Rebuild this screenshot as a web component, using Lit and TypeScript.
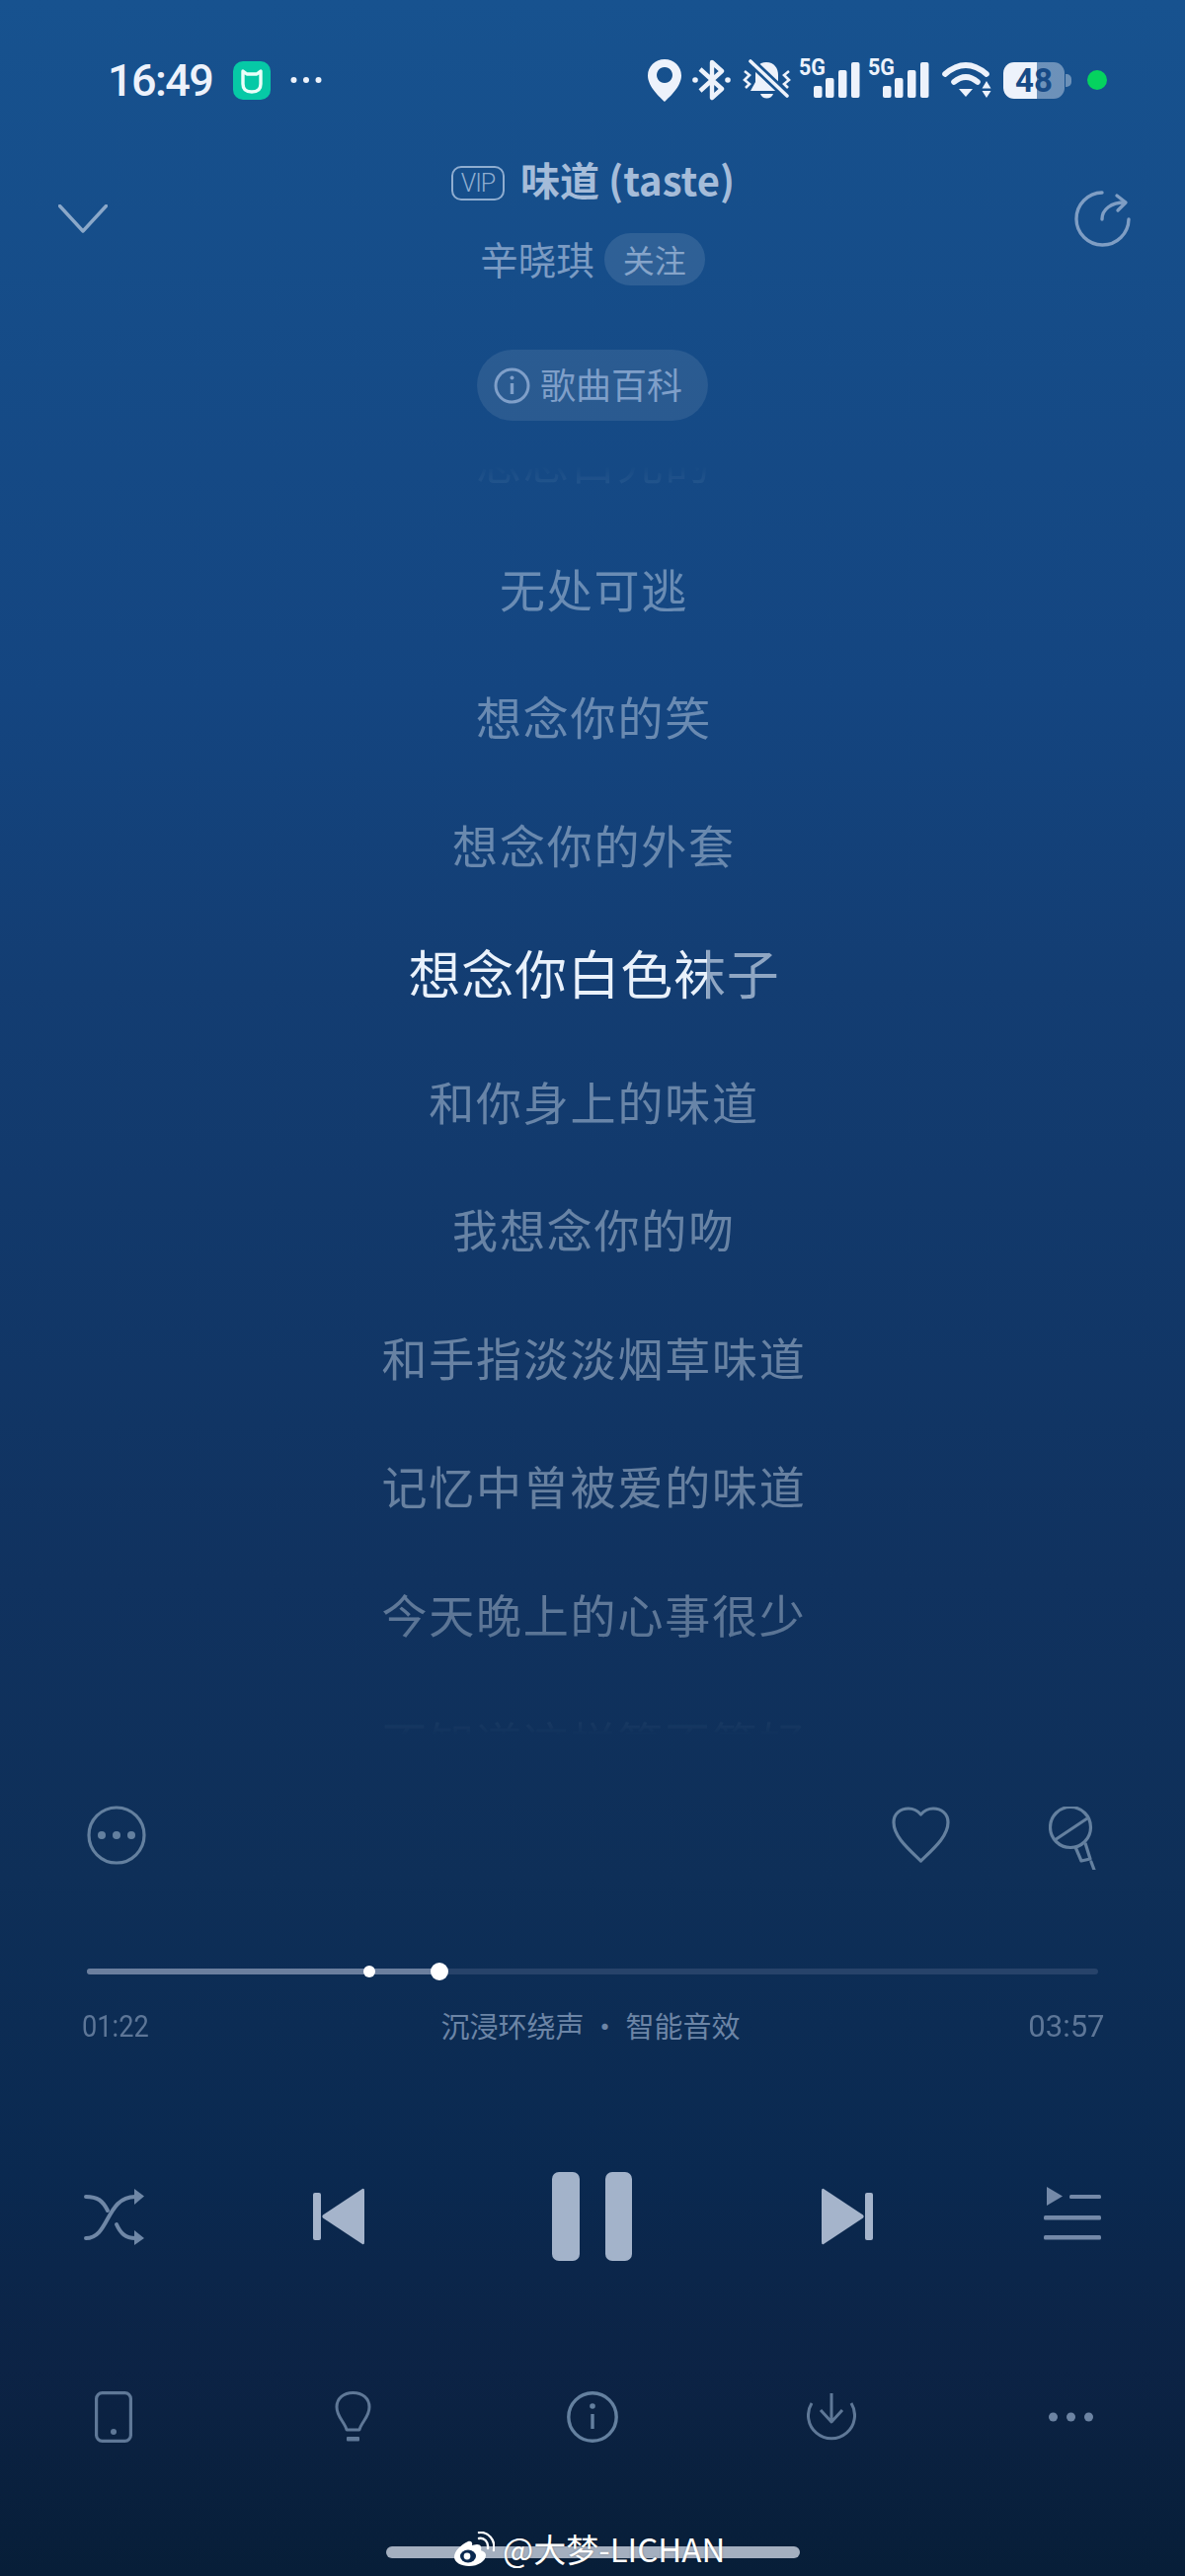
import { LitElement, css, html, svg } from 'lit';
import { customElement, state } from 'lit/decorators.js';

const LYRICS = [
  '思念白光的',
  '无处可逃',
  '想念你的笑',
  '想念你的外套',
  '想念你白色袜子',
  '和你身上的味道',
  '我想念你的吻',
  '和手指淡淡烟草味道',
  '记忆中曾被爱的味道',
  '今天晚上的心事很少',
  '不知道这样算不算好',
];
const ACTIVE = 4;

const signal = () => html`
  <svg class="signal" width="62" height="48" viewBox="0 0 62 48">
    <text x="0" y="25" textLength="27" lengthAdjust="spacingAndGlyphs" class="five-g">5G</text>
    ${[
      [15, 36],
      [27, 28],
      [40, 20],
      [53, 12],
    ].map(([x, y]) => svg`<rect x=${x} y=${y} width="8.5" height=${48 - y} rx="2" fill="#edf2fb"></rect>`)}
  </svg>
`;

@customElement('app-root')
export class AppRoot extends LitElement {
  @state() progress = 357 / 1023;
  @state() marker = 286 / 1023;

  static styles = css`
    :host {
      background: linear-gradient(
        to bottom,
        #17528f 0,
        #144580 700px,
        #133d72 1000px,
        #10325f 1600px,
        #0e2f58 1900px,
        #0a2950 2200px,
        #0c2345 2400px,
        #071e38 2608px
      );
      color: #fff;
      display: flex;
      flex-direction: column;
      font-family: 'Noto Sans CJK SC', 'Noto Sans', sans-serif;
      height: 2608px;
      overflow: hidden;
      position: relative;
      width: 1200px;
    }

    svg {
      display: block;
      flex: none;
    }

    /* status bar */
    .status {
      align-items: center;
      display: flex;
      flex: none;
      height: 162px;
      justify-content: space-between;
      padding: 0 79px 0 109px;
    }

    .status-left,
    .status-right {
      align-items: center;
      display: flex;
    }

    .clock {
      color: #edf2fb;
      font: 500 45px/1 Roboto, sans-serif;
      letter-spacing: -1.6px;
      width: 107px;
    }

    .mi {
      margin-left: 20px;
    }

    .status-dots {
      margin-left: 20px;
    }

    .bt {
      margin-left: 11px;
    }

    .bell {
      margin-left: 12px;
    }

    .signal {
      margin-bottom: 12px;
      margin-left: 8px;
    }

    .wifi {
      margin-left: 13px;
    }

    .battery {
      align-items: center;
      background: linear-gradient(to right, #edf2fb 34px, rgba(237, 242, 251, 0.4) 34px);
      border-radius: 11px;
      color: #174a86;
      display: flex;
      font: 700 33px/37px Roboto, sans-serif;
      height: 37px;
      justify-content: center;
      margin-left: 12px;
      margin-right: 7px;
      position: relative;
      width: 62px;
    }

    .battery::after {
      background: rgba(237, 242, 251, 0.4);
      border-radius: 0 5px 5px 0;
      content: '';
      height: 13px;
      left: 63px;
      position: absolute;
      top: 12px;
      width: 6px;
    }

    .live {
      background: #05d35f;
      border-radius: 50%;
      height: 20px;
      margin-left: 16px;
      width: 20px;
    }

    .five-g {
      fill: #edf2fb;
      font: 700 23px Roboto, sans-serif;
    }

    /* header */
    .header {
      display: flex;
      flex: none;
      height: 127px;
      justify-content: space-between;
      padding: 0 55px 0 59px;
    }

    .chevron {
      margin-top: 45px;
    }

    .share {
      margin-top: 31px;
    }

    .heading {
      align-items: center;
      display: flex;
      flex: 1;
      flex-direction: column;
      gap: 32px;
    }

    .title-row {
      align-items: center;
      display: flex;
      gap: 16px;
      height: 42px;
      margin-left: 4px;
    }

    .vip {
      align-items: center;
      border: 2px solid #8fadd0;
      border-radius: 10px;
      box-sizing: border-box;
      color: #8fadd0;
      display: flex;
      font: 300 25px/1 Roboto, sans-serif;
      height: 35px;
      justify-content: center;
      letter-spacing: -1px;
      margin-top: 5px;
      width: 54px;
    }

    .title {
      color: #a5bcd9;
      font-size: 40px;
      font-weight: 700;
      line-height: 42px;
      margin-top: -5px;
    }

    .artist-row {
      align-items: center;
      display: flex;
      gap: 10px;
      height: 53px;
      margin-left: 3px;
    }

    .artist {
      color: #7b9bc3;
      font-size: 38.5px;
      margin-top: -3px;
    }

    .follow {
      background: rgba(255, 255, 255, 0.11);
      border-radius: 27px;
      color: #86a4c9;
      font-size: 32px;
      line-height: 53px;
      padding: 0 19px;
    }

    .wiki {
      align-items: center;
      align-self: center;
      background: rgba(255, 255, 255, 0.09);
      border-radius: 36px;
      box-sizing: border-box;
      color: #7f9fc9;
      display: flex;
      flex: none;
      font-size: 36px;
      gap: 10px;
      height: 72px;
      margin-top: 65px;
      padding-left: 17px;
      width: 234px;
    }

    .wiki span {
      margin-top: -5px;
    }

    /* lyrics */
    .lyrics {
      flex: none;
      height: 1330px;
      overflow: hidden;
      -webkit-mask-image: linear-gradient(
        to bottom,
        transparent 45px,
        rgba(0, 0, 0, 0.16) 64px,
        #000 135px,
        #000 1150px,
        rgba(0, 0, 0, 0.85) 1230px,
        rgba(0, 0, 0, 0.1) 1318px,
        transparent 1332px
      );
      mask-image: linear-gradient(
        to bottom,
        transparent 45px,
        rgba(0, 0, 0, 0.16) 64px,
        #000 135px,
        #000 1150px,
        rgba(0, 0, 0, 0.85) 1230px,
        rgba(0, 0, 0, 0.1) 1318px,
        transparent 1332px
      );
    }

    .lyric-list {
      margin-top: -26px;
    }

    .line {
      align-items: center;
      color: rgba(235, 245, 255, 0.4);
      display: flex;
      font-size: 46px;
      height: 129.75px;
      justify-content: center;
      letter-spacing: 1.8px;
      padding-left: 3px;
    }

    .line.active {
      font-size: 53px;
      letter-spacing: 0.7px;
    }

    .wipe {
      background: linear-gradient(to right, #e9f1fb 80.6%, #8fa6c3 80.6%);
      -webkit-background-clip: text;
      background-clip: text;
      color: transparent;
    }

    /* actions + progress */
    .actions {
      display: flex;
      flex: none;
      height: 60px;
      margin-top: 72px;
      padding: 0 90px 0 88px;
    }

    .heart {
      margin-left: auto;
      margin-top: 1px;
    }

    .mic {
      margin-left: 100px;
      margin-top: 1px;
    }

    .progress {
      background: #27436a;
      border-radius: 3px;
      flex: none;
      height: 6px;
      margin: 105px 88px 0;
      position: relative;
    }

    .fill {
      background: #6b7f9e;
      border-radius: 3px;
      height: 100%;
    }

    .knob,
    .mark {
      background: #fff;
      border-radius: 50%;
      position: absolute;
      top: 50%;
      transform: translate(-50%, -50%);
    }

    .knob {
      height: 18px;
      width: 18px;
    }

    .mark {
      height: 12px;
      width: 12px;
    }

    .meta {
      align-items: center;
      color: #5d7697;
      display: flex;
      flex: none;
      height: 28px;
      justify-content: space-between;
      margin-top: 38px;
      padding: 0 86px 0 83px;
    }

    .stamp {
      font: 400 32px/1 Roboto, sans-serif;
      transform: scaleX(0.85);
      transform-origin: left center;
      white-space: nowrap;
      width: 68px;
    }

    .stamp.end {
      text-align: right;
      transform: scaleX(0.97);
      transform-origin: right center;
      width: 75px;
    }

    .effects {
      color: #6c85a6;
      font-size: 29px;
      margin-left: 6px;
      margin-top: -2px;
      white-space: nowrap;
    }

    /* transport */
    .transport {
      align-items: center;
      display: flex;
      flex: none;
      height: 90px;
      margin-top: 134px;
      padding-left: 85px;
    }

    .prev {
      margin-left: 171px;
    }

    .pause {
      display: flex;
      gap: 26px;
      margin-left: 190px;
    }

    .pause span {
      background: #a3b3ca;
      border-radius: 7px;
      display: block;
      height: 90px;
      width: 27.5px;
    }

    .next {
      margin-left: 192px;
    }

    .queue {
      margin-left: 173px;
      margin-top: -6px;
    }

    /* tools */
    .tools {
      align-items: center;
      display: grid;
      flex: none;
      grid-template-columns: repeat(5, 1fr);
      height: 52px;
      justify-items: center;
      margin: 132px -6px 0;
    }

    .home {
      align-self: center;
      background: #a4afbf;
      border-radius: 6px;
      flex: none;
      height: 12px;
      margin-top: 105px;
      width: 419px;
    }

    /* weibo watermark, sits over the home indicator */
    .watermark {
      align-items: center;
      color: #fff;
      display: flex;
      font-size: 33px;
      gap: 8px;
      left: 459px;
      position: absolute;
      text-shadow: 0 0 2px rgba(0, 0, 0, 0.35);
      top: 2556px;
      white-space: nowrap;
    }
  `;

  render() {
    return html`
      <div class="status">
        <div class="status-left">
          <span class="clock">16:49</span>
          <svg class="mi" width="38" height="39" viewBox="0 0 38 39">
            <rect width="38" height="39" rx="10" fill="#06c9a6"></rect>
            <path
              d="M10 10 L14 13 H24 L28 10 V23 C28 29 24 31 19 31 C14 31 10 29 10 23 Z"
              fill="none"
              stroke="#eafff9"
              stroke-width="3.4"
              stroke-linejoin="round"
            ></path>
            <path d="M13 24 H25" stroke="#06c9a6" stroke-width="2"></path>
          </svg>
          <svg class="status-dots" width="32" height="8" viewBox="0 0 32 8" fill="#edf2fb">
            <circle cx="3.5" cy="4" r="3"></circle>
            <circle cx="16" cy="4" r="3"></circle>
            <circle cx="28.5" cy="4" r="3"></circle>
          </svg>
        </div>
        <div class="status-right">
          <svg width="34" height="43" viewBox="0 0 34 43">
            <path
              fill="#edf2fb"
              fill-rule="evenodd"
              d="M17 0 C7.6 0 0 7.2 0 16.5 C0 28 13 39 17 43 C21 39 34 28 34 16.5 C34 7.2 26.4 0 17 0 Z M17 8 a8 8 0 1 0 .01 0 Z"
            ></path>
          </svg>
          <svg class="bt" width="39" height="42" viewBox="0 0 39 42" fill="none" stroke="#edf2fb">
            <path d="M8 10 L30 30 L20 39 V3 L30 12 L8 32" stroke-width="4.4" stroke-linejoin="round"></path>
            <circle cx="3" cy="21" r="2.8" fill="#edf2fb" stroke="none"></circle>
            <circle cx="36" cy="21" r="2.8" fill="#edf2fb" stroke="none"></circle>
          </svg>
          <svg class="bell" width="49" height="43" viewBox="0 0 49 43" fill="none">
            <path d="M24 3 C16 3 13 9 13 16 L13 23 L8 32 L41 32 L36 23 L36 16 C36 9 32 3 24 3 Z" fill="#edf2fb"></path>
            <path d="M18 35 H31 C29 41 20 41 18 35 Z" fill="#edf2fb"></path>
            <path d="M8 2 L45 37" stroke="#17528f" stroke-width="9"></path>
            <path d="M8 2 L45 37" stroke="#edf2fb" stroke-width="3.6" stroke-linecap="round"></path>
            <path d="M2 12 L7 16 L2 21 L7 25 L3 29" stroke="#edf2fb" stroke-width="2.6"></path>
            <path d="M47 12 L42 16 L47 21 L42 25 L46 29" stroke="#edf2fb" stroke-width="2.6"></path>
          </svg>
          ${signal()} ${signal()}
          <svg class="wifi" width="50" height="36" viewBox="0 0 50 36" fill="none" stroke="#edf2fb">
            <path d="M3 12 Q24 -6 45 12" stroke-width="5.6" stroke-linecap="round"></path>
            <path d="M12 20 Q24 10 36 20" stroke-width="5.6" stroke-linecap="round"></path>
            <path d="M17 27 H31 L24 35 Z" fill="#edf2fb" stroke="none"></path>
            <path d="M45 19 L49.5 26.5 H40.5 Z M40.5 29 H49.5 L45 36 Z" fill="#edf2fb" stroke="none"></path>
          </svg>
          <div class="battery">48</div>
          <span class="live"></span>
        </div>
      </div>

      <div class="header">
        <svg class="chevron" width="50" height="29" viewBox="0 0 50 29" fill="none" stroke="#8ba8c9" stroke-width="3.4">
          <path d="M1.5 1.5 L25 27 L48.5 1.5" stroke-linecap="round" stroke-linejoin="round"></path>
        </svg>
        <div class="heading">
          <div class="title-row">
            <span class="vip">VIP</span>
            <span class="title">味道 (taste)</span>
          </div>
          <div class="artist-row">
            <span class="artist">辛晓琪</span>
            <span class="follow">关注</span>
          </div>
        </div>
        <svg class="share" width="57" height="58" viewBox="0 0 57 58" fill="none" stroke="#7f9ec4" stroke-width="3.4" stroke-linecap="round" stroke-linejoin="round">
          <path d="M28 2 A26.5 26.5 0 1 0 55 29"></path>
          <path d="M28 29 C28 19 37 12 51 12"></path>
          <path d="M43 5 L52 12 L44 20"></path>
        </svg>
      </div>

      <div class="wiki">
        <svg width="37" height="37" viewBox="0 0 37 37" fill="none" stroke="currentColor" stroke-width="3">
          <circle cx="18.5" cy="18.5" r="16.5"></circle>
          <path d="M18.5 16 V27" stroke-width="3.4"></path>
          <circle cx="18.5" cy="10.5" r="2" fill="currentColor" stroke="none"></circle>
        </svg>
        <span>歌曲百科</span>
      </div>

      <div class="lyrics">
        <div class="lyric-list">
          ${LYRICS.map((text, i) =>
            i === ACTIVE
              ? html`<div class="line active"><span class="wipe">${text}</span></div>`
              : html`<div class="line">${text}</div>`,
          )}
        </div>
      </div>

      <div class="actions">
        <svg width="60" height="60" viewBox="0 0 60 60" fill="none" stroke="#64809f" stroke-width="3.2">
          <circle cx="30" cy="30" r="28"></circle>
          <g fill="#64809f" stroke="none">
            <circle cx="15" cy="30" r="4"></circle>
            <circle cx="30" cy="30" r="4"></circle>
            <circle cx="45" cy="30" r="4"></circle>
          </g>
        </svg>
        <svg class="heart" width="59" height="58" viewBox="0 0 59 58" fill="none" stroke="#64809f" stroke-width="3.2" stroke-linejoin="round">
          <path d="M29.5 55 C16 42 2 30 2 16 C2 7 9 2 17 2 C22 2 26 4 29.5 8 C33 4 37 2 42 2 C50 2 57 7 57 16 C57 30 43 42 29.5 55 Z"></path>
        </svg>
        <svg class="mic" width="48" height="64" viewBox="0 0 48 64" fill="none" stroke="#64809f" stroke-width="3.2" stroke-linejoin="round">
          <circle cx="22" cy="21" r="20.5"></circle>
          <path d="M6 34 L39 12"></path>
          <path d="M27 41 L33 55 L42 53 L37 37"></path>
          <path d="M43 56 L46 64" stroke-linecap="round"></path>
        </svg>
      </div>

      <div class="progress">
        <div class="fill" style="width:${this.progress * 100}%"></div>
        <span class="mark" style="left:${this.marker * 100}%"></span>
        <span class="knob" style="left:${this.progress * 100}%"></span>
      </div>

      <div class="meta">
        <span class="stamp">01:22</span>
        <span class="effects">沉浸环绕声 · 智能音效</span>
        <span class="stamp end">03:57</span>
      </div>

      <div class="transport">
        <svg width="61" height="57" viewBox="0 0 61 57" fill="none" stroke="#6f87a6" stroke-width="4" stroke-linecap="round">
          <path d="M2 8 C14 8 19 12 24 22"></path>
          <path d="M2 50 C26 50 22 8 52 8"></path>
          <path d="M33 36 C37 45 42 50 52 50"></path>
          <g fill="#6f87a6" stroke="none">
            <path d="M51 0 L61 7.5 L51 16 Z"></path>
            <path d="M51 42 L61 50 L51 57 Z"></path>
          </g>
        </svg>
        <svg class="prev" width="52" height="58" viewBox="0 0 52 58" fill="#a5b4cb">
          <rect y="5" width="8" height="48" rx="2"></rect>
          <path d="M50 1 Q52 0 52 3 V55 Q52 58 50 57 L10 30.5 Q8.5 29 10 27.5 Z"></path>
        </svg>
        <div class="pause"><span></span><span></span></div>
        <svg class="next" width="52" height="58" viewBox="0 0 52 58" fill="#a5b4cb">
          <rect x="44" y="5" width="8" height="48" rx="2"></rect>
          <path d="M2 1 Q0 0 0 3 V55 Q0 58 2 57 L42 30.5 Q43.5 29 42 27.5 Z"></path>
        </svg>
        <svg class="queue" width="58" height="54" viewBox="0 0 58 54" fill="#7489a8">
          <path d="M3 0 L19 9.5 L3 19 Z"></path>
          <rect x="26" y="8" width="32" height="4" rx="1.5"></rect>
          <rect y="29" width="58" height="4.5" rx="1.5"></rect>
          <rect y="49" width="58" height="4.5" rx="1.5"></rect>
        </svg>
      </div>

      <div class="tools">
        <svg width="38" height="52" viewBox="0 0 38 52" fill="none" stroke="#5f7897" stroke-width="3.2">
          <rect x="1.6" y="1.6" width="34.8" height="48.8" rx="6"></rect>
          <circle cx="19" cy="41" r="3" fill="#5f7897" stroke="none"></circle>
        </svg>
        <svg width="37" height="52" viewBox="0 0 37 52" fill="none" stroke="#5f7897" stroke-width="3">
          <path d="M12 39 C10 31 2 26 2 16 C2 7 9 1.5 18.5 1.5 C28 1.5 35 7 35 16 C35 26 27 31 25 39 Z" stroke-linejoin="round"></path>
          <rect x="12" y="46" width="13" height="4.5" rx="1" fill="#5f7897" stroke="none"></rect>
        </svg>
        <svg width="52" height="52" viewBox="0 0 52 52" fill="none" stroke="#64809f" stroke-width="3.4">
          <circle cx="26" cy="26" r="24.2"></circle>
          <path d="M26 23 V38"></path>
          <circle cx="26" cy="15" r="2.8" fill="#64809f" stroke="none"></circle>
        </svg>
        <svg width="50" height="48" viewBox="0 0 50 48" fill="none" stroke="#5f7897" stroke-width="3" stroke-linejoin="round">
          <path d="M5 10 A23.5 23.5 0 1 0 45 10"></path>
          <path d="M25 0 V28 M14 17 L25 29 L36 17"></path>
        </svg>
        <svg width="45" height="10" viewBox="0 0 45 10" fill="#6d84a3">
          <circle cx="4.5" cy="5" r="4.5"></circle>
          <circle cx="22.5" cy="5" r="4.5"></circle>
          <circle cx="40.5" cy="5" r="4.5"></circle>
        </svg>
      </div>

      <div class="home"></div>

      <div class="watermark">
        <svg width="42" height="35" viewBox="0 0 42 35">
          <path
            fill="#fff"
            d="M15 10 C7 14 1 20 1 26 C1 31 8 35 16 35 C25 35 33 30 33 24 C33 21 30 20 28 19 C29 16 28 13 24 13 C22 13 20 14 19 14 C20 11 18 9 15 10 Z"
          ></path>
          <ellipse cx="15" cy="25" rx="8" ry="6.5" fill="#0a2950"></ellipse>
          <circle cx="14" cy="25" r="3.4" fill="#fff"></circle>
          <path d="M26 7 C31 6 36 10 35 17 M26 1 C35 0 43 8 41 19" fill="none" stroke="#fff" stroke-width="2.4" stroke-linecap="round"></path>
        </svg>
        <span>@大梦-LICHAN</span>
      </div>
    `;
  }
}

declare global {
  interface HTMLElementTagNameMap {
    'app-root': AppRoot;
  }
}
